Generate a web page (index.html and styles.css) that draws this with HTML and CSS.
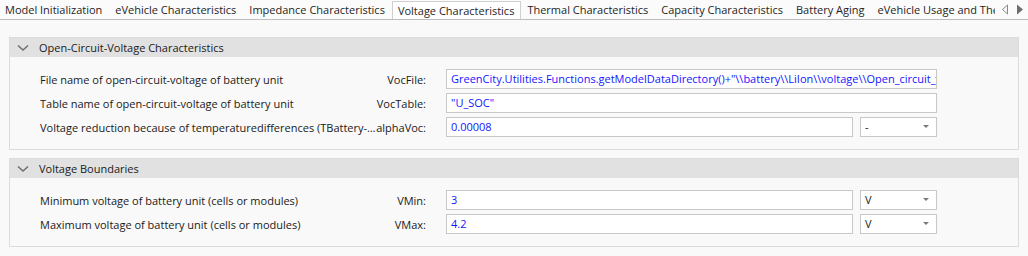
FILE: index.html
```html
<!DOCTYPE html>
<html lang="en">
<head>
  <meta charset="UTF-8">
  <title>Voltage Characteristics</title>
  <link rel="stylesheet" href="styles.css">
</head>
<body>

  <!-- Tab strip -->
  <div class="tabs">
    <div class="tab-list">
      <span class="tab">Model Initialization</span>
      <span class="tab">eVehicle Characteristics</span>
      <span class="tab">Impedance Characteristics</span>
      <span class="tab active">Voltage Characteristics</span>
      <span class="tab">Thermal Characteristics</span>
      <span class="tab">Capacity Characteristics</span>
      <span class="tab">Battery Aging</span>
      <span class="tab">eVehicle Usage and Thermal Management</span>
    </div>
    <div class="tab-nav">
      <svg width="8" height="11" viewBox="0 0 8 11"><path d="M6.5 1 L1.5 5.5 L6.5 10 Z" fill="none" stroke="#8a8a8a" stroke-width="1"/></svg>
      <svg width="8" height="11" viewBox="0 0 8 11"><path d="M1 0.5 L7 5.5 L1 10.5 Z" fill="#6e6e6e"/></svg>
    </div>
  </div>

  <div class="page">
    <!-- Group 1 -->
    <div class="group">
      <div class="group-head">
        <svg class="chevron" width="12" height="8" viewBox="0 0 12 8"><path d="M1 1.5 L6 6 L11 1.5" fill="none" stroke="#6f6f6f" stroke-width="1.6"/></svg>
        <span>Open-Circuit-Voltage Characteristics</span>
      </div>
      <div class="group-body">
        <div class="row">
          <span class="desc">File name of open-circuit-voltage of battery unit</span>
          <span class="name">VocFile:</span>
          <div class="field wide">GreenCity.Utilities.Functions.getModelDataDirectory()+"\\battery\\LiIon\\voltage\\Open_circuit_voltage.txt"</div>
        </div>
        <div class="row">
          <span class="desc">Table name of open-circuit-voltage of battery unit</span>
          <span class="name">VocTable:</span>
          <div class="field wide">"U_SOC"</div>
        </div>
        <div class="row">
          <span class="desc">Voltage reduction because of temperaturedifferences (TBattery-TReference)</span>
          <span class="name">alphaVoc:</span>
          <div class="field">0.00008</div>
          <div class="unit">-<i class="caret"></i></div>
        </div>
      </div>
    </div>

    <!-- Group 2 -->
    <div class="group">
      <div class="group-head">
        <svg class="chevron" width="12" height="8" viewBox="0 0 12 8"><path d="M1 1.5 L6 6 L11 1.5" fill="none" stroke="#6f6f6f" stroke-width="1.6"/></svg>
        <span>Voltage Boundaries</span>
      </div>
      <div class="group-body">
        <div class="row">
          <span class="desc">Minimum voltage of battery unit (cells or modules)</span>
          <span class="name">VMin:</span>
          <div class="field">3</div>
          <div class="unit">V<i class="caret"></i></div>
        </div>
        <div class="row">
          <span class="desc">Maximum voltage of battery unit (cells or modules)</span>
          <span class="name">VMax:</span>
          <div class="field">4.2</div>
          <div class="unit">V<i class="caret"></i></div>
        </div>
      </div>
    </div>
  </div>

</body>
</html>
```

FILE: styles.css
```css
body {
  margin: 0;
  font-family: "Open Sans", "Noto Sans", sans-serif;
  font-size: 11px;
  color: #1a1a1a;
  background-color: #f9f9f9;
}

/* tabs */
.tabs {
  display: flex;
  height: 19px;
  border-bottom: 1px solid #bdbdbd;
  background-color: #fbfbfb;
}

.tab-list {
  flex: 1;
  display: flex;
  overflow: hidden;
  white-space: nowrap;
}

.tab {
  padding: 0 7px 0 6px;
  line-height: 19px;
  color: #1e1e1e;
}

.tab:first-child {
  padding-left: 5px;
}

.tab.active {
  margin-top: 1px;
  margin-bottom: -1px;
  line-height: 18px;
  height: 19px;
  background-color: #fff;
  border: 1px solid #d0d0d0;
  border-bottom: none;
  padding: 0 6px 0 5px;
}

.tab-nav {
  display: flex;
  align-items: center;
  gap: 7px;
  padding: 0 4px 0 6px;
}

/* groups */
.page {
  padding: 17px 9px 0;
}

.group {
  border: 1px solid #dcdcdc;
  background-color: #f9f9f9;
  margin-bottom: 8px;
}

.group-head {
  display: flex;
  align-items: center;
  height: 19px;
  background-color: #e1e1e1;
  padding-left: 7px;
}

.chevron {
  margin-right: 10px;
}

.group-body {
  padding: 10px 81px 10px 30px;
}

.row {
  display: grid;
  grid-template-columns: minmax(0, 1fr) auto 407px 84px;
  align-items: center;
  height: 24px;
}

.desc {
  overflow: hidden;
  white-space: nowrap;
  text-overflow: ellipsis;
}

.name {
  margin-right: 20px;
}

.field {
  height: 18px;
  line-height: 17px;
  padding: 0 4px;
  border: 1px solid #c8c8c8;
  background-color: #fff;
  color: #1515ff;
  overflow: hidden;
  white-space: nowrap;
}

.field.wide {
  grid-column: 3 / 5;
}

.unit {
  position: relative;
  margin-left: 7px;
  height: 18px;
  line-height: 17px;
  padding: 0 4px;
  border: 1px solid #c8c8c8;
  background-color: #fff;
}

.caret {
  position: absolute;
  right: 7px;
  top: 7px;
  border-left: 3px solid transparent;
  border-right: 3px solid transparent;
  border-top: 3px solid #7a7a7a;
}
```
